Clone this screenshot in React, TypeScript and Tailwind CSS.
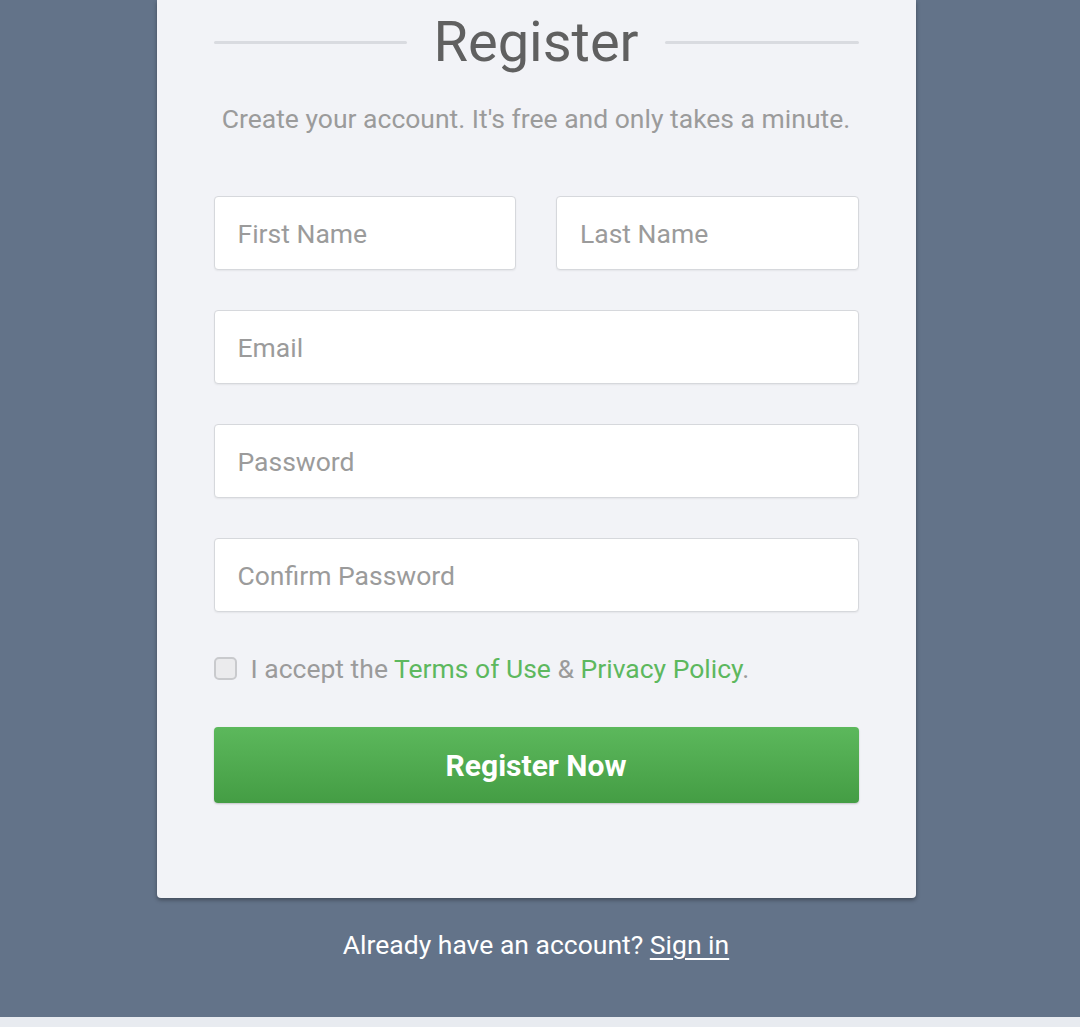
import { useState } from "react";

export default function App() {
  const [accepted, setAccepted] = useState(false);

  const inputCls =
    "h-[74px] w-full rounded-[4px] border border-[#d6d8dc] bg-white px-[23px] text-[26.5px] text-[#555] shadow-[0_1px_2px_rgba(0,0,0,0.06)] outline-none placeholder:text-[#9b9b9b]";

  return (
    <div className="flex min-h-[1027px] flex-col bg-[#637389] font-['Roboto',sans-serif]">
      <div className="flex flex-1 flex-col items-center pr-[8px]">
        {/* Card */}
        <div className="w-[759px] rounded-b-[4px] bg-[#f2f3f7] px-[57px] pt-[8px] pb-[95px] shadow-[0_2px_4px_rgba(0,0,0,0.35)]">
          {/* Title with side rules */}
          <div className="flex h-[68px] items-center gap-[26px]">
            <div className="h-[3px] flex-1 rounded bg-[#d9dbe0]" />
            <h2 className="text-[56px] leading-none font-normal text-[#606060]">Register</h2>
            <div className="h-[3px] flex-1 rounded bg-[#d9dbe0]" />
          </div>

          <p className="mt-[28px] text-center text-[26.5px] leading-[29px] text-[#9b9b9b]">
            Create your account. It's free and only takes a minute.
          </p>

          {/* Fields */}
          <div className="mt-[63px] flex flex-col gap-[40px]">
            <div className="flex gap-[40px]">
              <input className={inputCls} placeholder="First Name" />
              <input className={inputCls} placeholder="Last Name" />
            </div>
            <input className={inputCls} type="email" placeholder="Email" />
            <input className={inputCls} type="password" placeholder="Password" />
            <input className={inputCls} type="password" placeholder="Confirm Password" />
          </div>

          {/* Terms */}
          <label className="mt-[44px] flex h-[24px] cursor-pointer items-center gap-[14px]">
            <input
              type="checkbox"
              checked={accepted}
              onChange={(e) => setAccepted(e.target.checked)}
              className="h-[23px] w-[23px] appearance-none rounded-[5px] border-2 border-[#c9cacd] bg-[#ebebed] checked:bg-[#5cb85c]"
            />
            <span className="text-[26.5px] leading-[29px] text-[#9b9b9b]">
              I accept the <a href="#" className="text-[#5db85e]">Terms of Use</a> &amp;{" "}
              <a href="#" className="text-[#5db85e]">Privacy Policy</a>.
            </span>
          </label>

          {/* Submit */}
          <button className="mt-[47px] flex h-[76px] w-full items-center justify-center rounded-[4px] bg-gradient-to-b from-[#5cb85c] to-[#449d44] text-[30px] font-bold text-white shadow-[0_1px_2px_rgba(0,0,0,0.2)]">
            Register Now
          </button>
        </div>

        <p className="mt-[32px] text-[26.5px] leading-[29px] text-white">
          Already have an account? <a href="#" className="underline underline-offset-4">Sign in</a>
        </p>
      </div>
      <div className="h-[10px] bg-[#e8ebf0]" />
    </div>
  );
}
